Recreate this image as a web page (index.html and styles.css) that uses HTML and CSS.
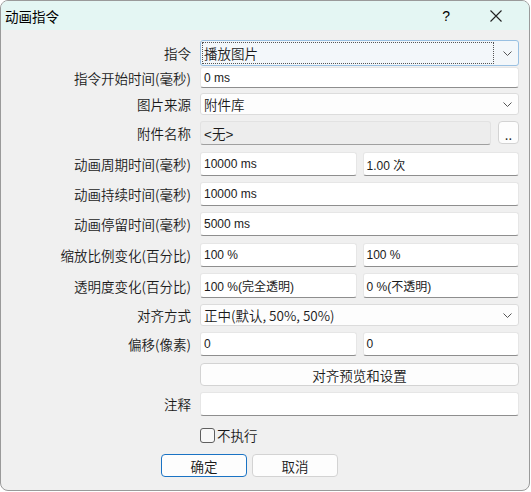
FILE: index.html
```html
<!DOCTYPE html>
<html lang="zh-CN">
<head>
  <meta charset="UTF-8">
  <title>动画指令</title>
  <link rel="stylesheet" href="styles.css">
</head>
<body>
  <div class="window">
    <div class="titlebar">
      <span class="title">动画指令</span>
      <span class="help">?</span>
      <svg class="close" width="12" height="12" viewBox="0 0 12 12">
        <path d="M0.5 0.5 L11.5 11.5 M11.5 0.5 L0.5 11.5" stroke="#222" stroke-width="1.1" fill="none"/>
      </svg>
    </div>

    <div class="form">
      <div class="row">
        <label>指令</label>
        <div class="combo focused">
          <span class="combo-text">播放图片</span>
          <svg class="chevron" width="9" height="5" viewBox="0 0 9 5"><path d="M0.5 0.5 L4.5 4.5 L8.5 0.5" stroke="#555" fill="none"/></svg>
        </div>
      </div>

      <div class="row">
        <label>指令开始时间(毫秒)</label>
        <div class="edit">0 ms</div>
      </div>

      <div class="row gap5">
        <label>图片来源</label>
        <div class="combo">
          <span class="combo-text">附件库</span>
          <svg class="chevron" width="9" height="5" viewBox="0 0 9 5"><path d="M0.5 0.5 L4.5 4.5 L8.5 0.5" stroke="#555" fill="none"/></svg>
        </div>
      </div>

      <div class="row tall gap7">
        <label>附件名称</label>
        <div class="pair attach">
          <div class="edit readonly">&lt;无&gt;</div>
          <button class="small-btn">..</button>
        </div>
      </div>

      <div class="row tall gap7">
        <label>动画周期时间(毫秒)</label>
        <div class="pair">
          <div class="edit">10000 ms</div>
          <div class="edit">1.00 次</div>
        </div>
      </div>

      <div class="row tall">
        <label>动画持续时间(毫秒)</label>
        <div class="edit">10000 ms</div>
      </div>

      <div class="row tall">
        <label>动画停留时间(毫秒)</label>
        <div class="edit">5000 ms</div>
      </div>

      <div class="row tall gap7">
        <label>缩放比例变化(百分比)</label>
        <div class="pair">
          <div class="edit">100 %</div>
          <div class="edit">100 %</div>
        </div>
      </div>

      <div class="row taller">
        <label>透明度变化(百分比)</label>
        <div class="pair">
          <div class="edit">100 %(完全透明)</div>
          <div class="edit">0 %(不透明)</div>
        </div>
      </div>

      <div class="row">
        <label>对齐方式</label>
        <div class="combo">
          <span class="combo-text">正中(默认, 50%, 50%)</span>
          <svg class="chevron" width="9" height="5" viewBox="0 0 9 5"><path d="M0.5 0.5 L4.5 4.5 L8.5 0.5" stroke="#555" fill="none"/></svg>
        </div>
      </div>

      <div class="row tall gap7">
        <label>偏移(像素)</label>
        <div class="pair">
          <div class="edit">0</div>
          <div class="edit">0</div>
        </div>
      </div>

      <div class="row mid gap7">
        <label></label>
        <button class="btn wide">对齐预览和设置</button>
      </div>

      <div class="row tall">
        <label>注释</label>
        <div class="edit"></div>
      </div>

      <div class="row check-row">
        <label></label>
        <div class="check">
          <span class="box"></span>
          <span>不执行</span>
        </div>
      </div>

      <div class="actions">
        <button class="btn default">确定</button>
        <button class="btn">取消</button>
      </div>
    </div>
  </div>
</body>
</html>
```

FILE: styles.css
```css
body {
  margin: 0;
  background: #fff;
  font-family: "Noto Sans CJK SC", "Liberation Sans", sans-serif;
  font-size: 13.5px;
  font-weight: 350;
  color: #1a1a1a;
}

.window {
  box-sizing: border-box;
  width: 530px;
  height: 491px;
  border: 1px solid #9a9a9a;
  border-radius: 8px;
  background: #f0f0f0;
  overflow: hidden;
}

.titlebar {
  height: 29px;
  background: #e4f6f3;
  display: flex;
  align-items: center;
  padding-left: 4px;
  font-size: 13.5px;
  font-weight: 400;
  color: #000;
}
.title {
  flex: 1;
}
.help {
  font-family: "Liberation Sans", sans-serif;
  font-size: 14px;
  margin-right: 40px;
}
.close {
  margin-right: 27px;
}

.form {
  padding: 10px 10px 0 0;
}

.row {
  display: grid;
  grid-template-columns: 190px 1fr;
  column-gap: 9px;
  align-items: center;
  height: 21px;
  margin-top: 6px;
}
.row:first-child {
  margin-top: 0;
}
.row.tall { height: 24px; }
.row.taller { height: 25px; }
.row.mid { height: 23px; }
.row.gap5 { margin-top: 5px; }
.row.gap7 { margin-top: 7px; }
.row.check-row {
  height: 15px;
  margin-top: 12px;
}

label {
  text-align: right;
  white-space: nowrap;
}

.edit {
  box-sizing: border-box;
  height: 100%;
  background: #fff;
  border: 1px solid #e6e6e6;
  border-bottom-color: #8e8e8e;
  border-radius: 3px;
  padding: 0 3px;
  display: flex;
  align-items: center;
  font-family: "Liberation Sans", "Noto Sans CJK SC", sans-serif;
  font-size: 12px;
  font-weight: 400;
  white-space: nowrap;
}
.edit.readonly {
  background: #ededed;
  border-color: #e2e2e2;
  border-bottom-color: #a0a0a0;
  font-size: 13.5px;
  font-weight: 350;
}

.pair {
  display: grid;
  grid-template-columns: 1fr 1fr;
  column-gap: 6px;
  height: 100%;
}
.pair.attach {
  grid-template-columns: 1fr 21px;
  column-gap: 7px;
}

.combo {
  box-sizing: border-box;
  height: 100%;
  background: #fdfdfd;
  border: 1px solid #dcdcdc;
  border-radius: 3px;
  display: flex;
  align-items: center;
  padding: 0 6px 0 3px;
  font-size: 13.5px;
}
.combo-text {
  flex: 1;
  white-space: nowrap;
}
.combo.focused {
  background: #f3f7fa;
  border-color: #99c0e2;
  padding: 1px 6px 1px 1px;
}
.combo.focused .combo-text {
  box-sizing: border-box;
  height: 100%;
  border: 1px dotted #555;
  padding-left: 1px;
  margin-right: 9px;
  display: flex;
  align-items: center;
}

.small-btn,
.btn {
  box-sizing: border-box;
  height: 100%;
  background: #fdfdfd;
  border: 1px solid #d3d3d3;
  border-radius: 4px;
  font-family: inherit;
  font-size: 13.5px;
  font-weight: 350;
  color: #1a1a1a;
  padding: 0;
}
.small-btn {
  height: 23px;
  line-height: 1;
  padding-top: 4px;
}

.check {
  display: flex;
  align-items: center;
  gap: 2px;
  height: 15px;
  line-height: 15px;
}
.box {
  box-sizing: border-box;
  width: 15px;
  height: 15px;
  border: 1px solid #5f5f5f;
  border-radius: 3px;
  background: #f8f8f8;
}

.actions {
  display: flex;
  gap: 5px;
  margin-top: 11px;
  padding-left: 160px;
  height: 23px;
}
.actions .btn {
  width: 86px;
}
.btn.default {
  border-color: #1a73c4;
}
```
